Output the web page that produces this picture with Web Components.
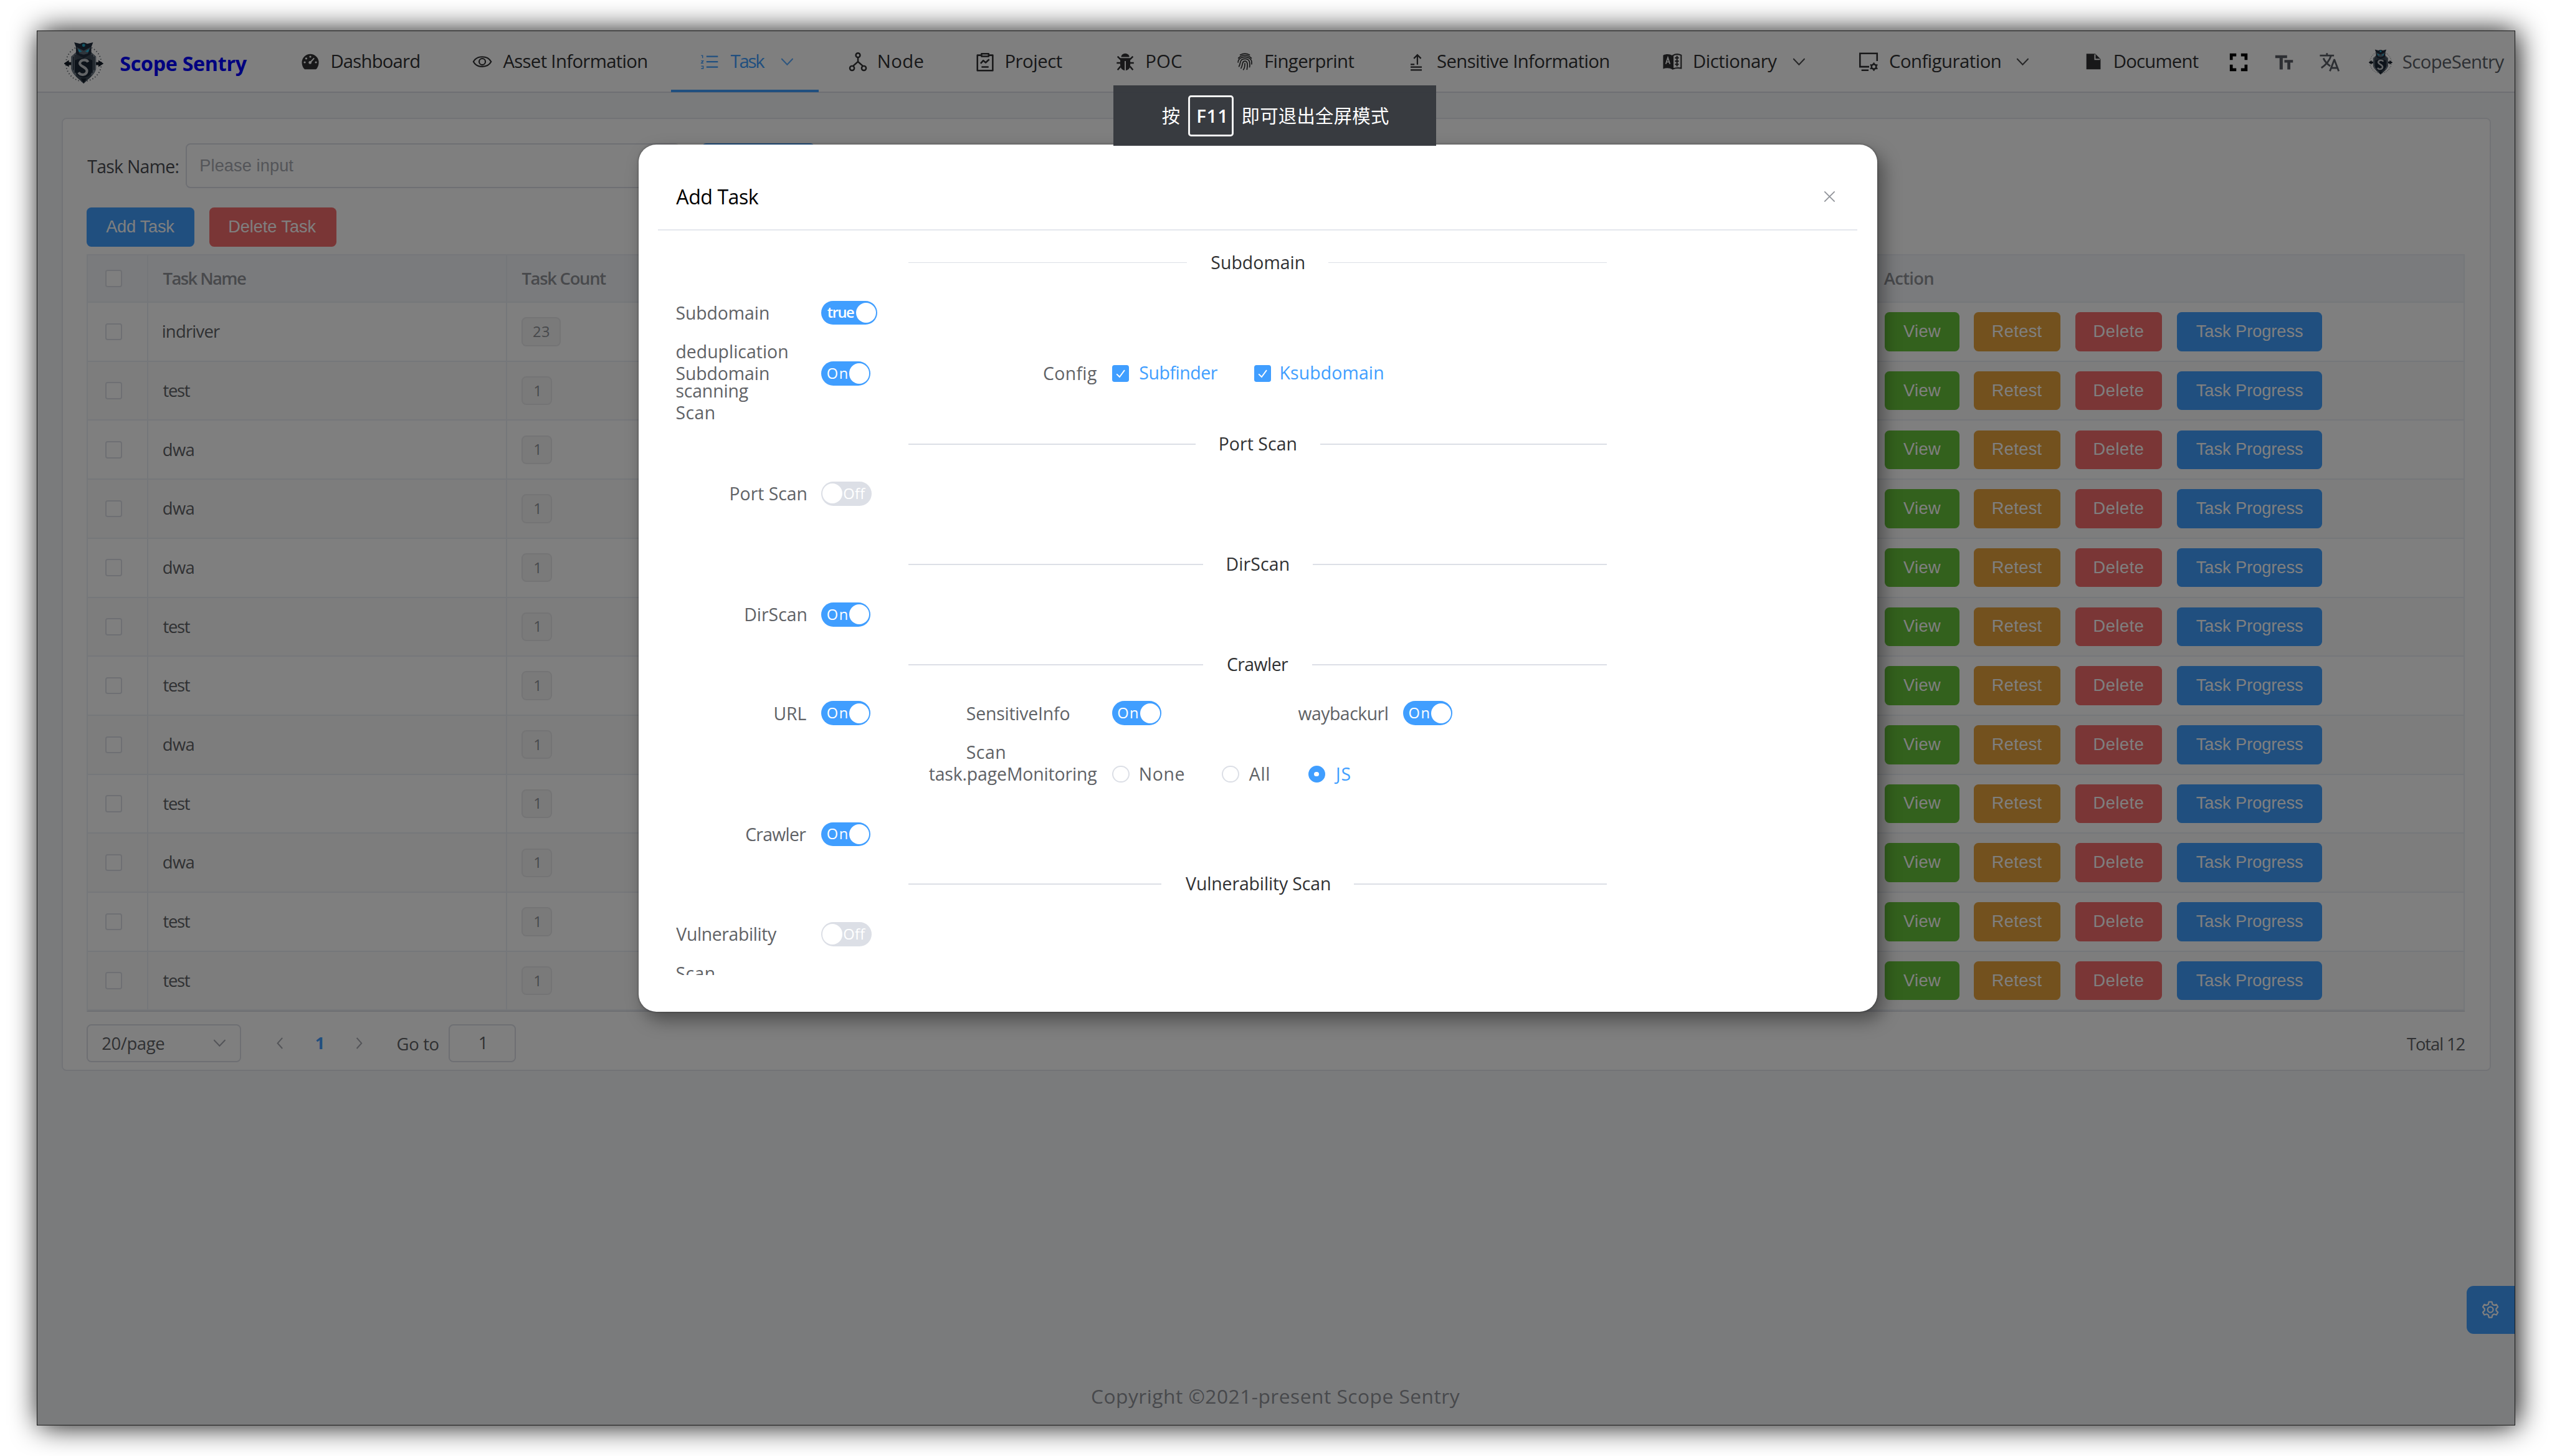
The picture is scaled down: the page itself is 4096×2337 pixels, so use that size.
<!DOCTYPE html>
<html lang="en">
<head>
<meta charset="utf-8">
<title>Scope Sentry</title>
<style>
html,body{margin:0;padding:0;background:#fff;overflow:hidden}
body{width:4096px;height:2337px;font-family:"Open Sans","Noto Sans CJK SC",sans-serif}
</style>
</head>
<body>
<scope-app></scope-app>
<script>
const OS='"Open Sans","Noto Sans CJK SC",sans-serif', AR='"Liberation Sans",Arial,sans-serif';
const def=(name,render,after)=>customElements.define(name,class extends HTMLElement{
  constructor(){super();this.attachShadow({mode:'open'});}
  connectedCallback(){
    const a=(k,d='')=>this.hasAttribute(k)?this.getAttribute(k):d;
    this.shadowRoot.innerHTML='<style>*{box-sizing:border-box}</style>'+render(a);
    if(after)after(this,a);
  }
});
const ctx=document.createElement('canvas').getContext('2d');

/* Text whose box is its ink: w sets the ink width, spread by letter spacing. */
def('fit-text',a=>`<style>:host{display:inline-block;white-space:pre;flex:none}span{display:block;font-variant-ligatures:none}</style><span></span>`,(el,a)=>{
  const t=a('t'),fs=+a('fs',30),wt=a('wt','400'),ff=a('ff')==='ar'?AR:OS,w=+a('w',0);
  const s=el.shadowRoot.querySelector('span');s.textContent=t;
  ctx.font=`${wt} ${fs}px ${ff}`;
  const m=ctx.measureText(t),ink=m.actualBoundingBoxLeft+m.actualBoundingBoxRight;
  const ls=w&&t.length>1?(w-ink)/(t.length-1):0;
  s.style.cssText=`font:${wt} ${fs}px/${a('lh',fs*1.4)}px ${ff};letter-spacing:${ls.toFixed(3)}px;margin-left:${m.actualBoundingBoxLeft.toFixed(2)}px;width:${(w||ink)-m.actualBoundingBoxLeft}px`;
  if(a('c'))s.style.color=a('c');
});

const ICONS={
dash:`<path d="M8.500 31C5 28 3.700 23 3.700 19.300A14.300 14.300 0 0 1 32.300 19.300C32.300 23 31 28 27.500 31Z" fill="currentColor"/><g fill="#fff"><circle cx="18" cy="9.500" r="1.700"/><circle cx="11" cy="12.500" r="1.700"/><circle cx="8.500" cy="19" r="1.700"/><circle cx="27.500" cy="19" r="1.700"/><circle cx="17.600" cy="19.500" r="2.500"/></g><path d="M17.600 19.500L24.500 12" stroke="#fff" stroke-width="2.100"/>`,
eye:`<g fill="none" stroke="currentColor" stroke-width="2.3"><path d="M3 18C9 7 27 7 33 18C27 29 9 29 3 18Z"/><circle cx="18" cy="18" r="5.3"/></g>`,
list:`<g stroke="currentColor" stroke-width="2.4"><path d="M12.500 9H32M12.500 18H32M12.500 27H32"/><path d="M3.500 7.500H6V12M3.500 16.500H7L4 20.500H7.500M3.500 25.500H7V29.500H3.500" fill="none" stroke-width="1.500"/></g>`,
node:`<g fill="none" stroke="currentColor" stroke-width="2.600"><circle cx="18" cy="7" r="3.600"/><circle cx="8" cy="29" r="3.800"/><circle cx="28" cy="29" r="3.800"/><path d="M18 11V18L9.500 25.500M18 18L26.500 25.500"/></g>`,
proj:`<g fill="none" stroke="currentColor" stroke-width="2.700" stroke-linejoin="round"><path d="M11 7H5V33H31V7H25"/><path d="M12 4.500H24V9H12Z"/><path d="M10.500 21L15 16L19 19.500L25 14M12 27H24"/></g>`,
bug:`<g fill="currentColor"><path d="M11 10A7 6 0 0 1 25 10Z"/><path d="M9.500 12H26.500V24A8.500 9 0 0 1 9.500 24Z"/></g><path d="M18 17V33" stroke="#fff" stroke-width="2"/><g fill="none" stroke="currentColor" stroke-width="2.600"><path d="M5 9L10 14M31 9L26 14M3.500 20H10M32.500 20H26M5 32L10 26M31 32L26 26"/></g>`,
finger:`<g fill="none" stroke="currentColor" stroke-width="1.800" stroke-linecap="round"><path d="M10 6.500C15 3.800 21 3.800 26 6.500M7 12C13 5.500 23 5.500 29 12M6.500 19C6.500 7 29.500 7 29.500 19V22M8 26C11 22 8.500 13 18 13C26 13 27 19 26 27M11.500 29C15 24 12.500 17 18 17C23 17 23 24 21.500 31M15.500 31.500C18 28 18 25 18 21"/></g>`,
up:`<g fill="none" stroke="currentColor" stroke-width="2.400"><path d="M20 23V7M14 12.500L20 6.500L26 12.500M8.500 22.500H15M8.500 27H27.500M8.500 32H27.500"/></g>`,
book:`<path d="M2.500 7C8 4.500 14 5 18 7.500V31C14 28.500 8 28 2.500 30Z" fill="currentColor"/><path d="M19 7.500C23 5 28 4.500 33 7V29C28 28 23 28.500 19 30Z" fill="none" stroke="currentColor" stroke-width="2.200"/><path d="M7 22L10.500 11L14 22M8.500 18.500H12.500" fill="none" stroke="#fff" stroke-width="1.800"/><path d="M22.500 11.500H29M22.500 17H29M22.500 22.500H29M26 8V26" stroke="currentColor" stroke-width="2.200"/>`,
cfg:`<g fill="none" stroke="currentColor" stroke-width="2.700"><path d="M19 26.500H3.500V4H32.500V17M6 32.500H18"/><circle cx="27" cy="26.500" r="4"/><path d="M27 19.500V23M27 30V33.500M20.900 23L24 24.700M30 28.300L33.100 30M20.900 30L24 28.300M30 24.700L33.100 23" stroke-width="2.400"/></g>`,
doc:`<path d="M6 4.500H21L30 13.500V31H6Z" fill="currentColor"/><path d="M20.500 5.500V14H29" fill="none" stroke="#fff" stroke-width="2"/>`,
full:`<path d="M5.500 14V5.500H14M22 5.500H30.500V14M30.500 22V30.500H22M14 30.500H5.500V22" fill="none" stroke="currentColor" stroke-width="5"/>`,
font:`<path d="M3 6H23V10.800H15.700V30H10.300V10.800H3ZM18.500 14H33V18.500H28.500V30H23.500V18.500H18.500Z" fill="currentColor"/>`,
lang:`<g fill="none" stroke="currentColor" stroke-width="3"><path d="M1.500 6.500H25.500M13.500 2.500V6.500M20.500 6.500C18 15 12 22 4 27.500M7.500 11C10 17 14 21 19 24.500"/><path d="M18.500 33L25.800 14H26.200L33.500 33M21 27.500H31"/></g>`,
down:`<path d="M2 6L11 15.500L20 6" fill="none" stroke="currentColor" stroke-width="2.200" stroke-linecap="round"/>`,
left:`<path d="M15 2L7 11L15 20" fill="none" stroke="currentColor" stroke-width="2.200"/>`,
right:`<path d="M7 2L15 11L7 20" fill="none" stroke="currentColor" stroke-width="2.200"/>`,
close:`<path d="M1.500 1.500L20.500 20.500M20.500 1.500L1.500 20.500" stroke="currentColor" stroke-width="2"/>`,
gear:`<g fill="none" stroke="currentColor" stroke-width="2.500" stroke-linejoin="round"><circle cx="18" cy="18" r="5"/><path d="M15.300 4H20.700L21.700 8.300L24.600 10L28.900 8.600L31.500 13.200L28.400 16.400V19.600L31.500 22.800L28.900 27.400L24.600 26L21.700 27.700L20.700 32H15.300L14.300 27.700L11.400 26L7.100 27.400L4.500 22.800L7.600 19.600V16.400L4.500 13.200L7.100 8.600L11.400 10L14.300 8.300Z"/></g>`
};
const SMALL=['down','left','right','close'];
def('ui-icon',a=>{const n=a('n'),b=SMALL.includes(n)?22:36,s=a('s',b);
  return `<style>:host{display:block;flex:none;width:${s}px;height:${s}px;line-height:0}svg{display:block}</style><svg width="${s}" height="${s}" viewBox="0 0 ${b} ${b}">${ICONS[n]}</svg>`});

def('owl-logo',a=>{const w=+a('w',66),h=w*72/66;
  return `<style>:host{display:block;flex:none}svg{display:block}</style><svg width="${w}" height="${h}" viewBox="0 0 66 72">
  <circle cx="33" cy="37" r="30" fill="none" stroke="#5c636b" stroke-width="2" stroke-dasharray="1.500 3.500"/>
  <path d="M1 37L7 33V41ZM65 37L59 33V41Z" fill="#141d28" stroke="#141d28" stroke-width="2"/><path d="M6 37H13M53 37H60" stroke="#141d28" stroke-width="5"/>
  <path d="M12 25L20 18H46L54 25V46C51 57 42 62 33 71C24 62 15 57 12 46Z" fill="#3c4855"/>
  <path d="M12 25L20 19V58C15 54 13 50 12 46ZM54 25L46 19V58C51 54 53 50 54 46Z" fill="#75808c"/>
  <path d="M15.500 25V48M50.500 25V48M18.500 22V53M47.500 22V53" stroke="#1e2a38" stroke-width="1.600"/>
  <path d="M17 1L27 3.500C31 1 35 1 39 3.500L49 1L46 9V19C43 24 38 24 33 28C28 24 23 24 20 19V9Z" fill="#202d3d"/>
  <path d="M21 9L33 15L45 9L40 20L33 22L26 20Z" fill="#5d6a78"/>
  <path d="M23.500 12L30.500 17L25 17.500ZM42.500 12L35.500 17L41 17.500Z" fill="#25bfe6"/><circle cx="33" cy="6" r="2.600" fill="#22a9c9"/>
  <path d="M18 32C24 27 42 27 48 32V48C46 56 40 60 33 61C26 60 20 56 18 48Z" fill="#1b2634"/><path d="M28 62H38L33 70Z" fill="#16202c"/>
  <path d="M40.500 34.500C38 29.500 28 30 26.500 36C25.500 42 39.500 43 38.500 50C38 56.500 28 58 24.500 52" fill="none" stroke="#c4c8cc" stroke-width="4.400"/>
  </svg>`});

def('nav-item',a=>`<style>:host{display:flex;align-items:center;flex:0 0 ${a('w')}px;height:104px;padding-left:48px;box-sizing:border-box;color:${a('on')?'#409eff':'#303133'};${a('on')?'border-bottom:4.300px solid #409eff;padding-top:4px':''}}
  fit-text{margin:-1px 0 0 ${a('g',18)}px}.d{margin:1px 0 0 26px;opacity:.85}</style>
  <ui-icon n="${a('i')}"></ui-icon><fit-text t="${a('t')}" w="${a('tw')}" fs="31"></fit-text>${a('d')?'<ui-icon class="d" n="down"></ui-icon>':''}`);

def('top-bar',a=>`<style>:host{display:flex;flex:none;height:104.500px;background:#fff;border-bottom:2.200px solid #dcdfe6;align-items:center;box-sizing:border-box;padding-left:46px}
  owl-logo{margin-top:4px}.b{margin:5px 41px 0 29px;color:#00f}.r{display:flex;align-items:center;color:#5a5e66}.r>*{margin-top:2px}</style>
  <owl-logo w="66"></owl-logo><fit-text class="b" t="Scope Sentry" w="215" fs="34" wt="700"></fit-text>
  <nav-item i="dash" t="Dashboard" tw="148" w="291.5" g="19"></nav-item>
  <nav-item i="eye" t="Asset Information" tw="244" w="385.5" g="17"></nav-item>
  <nav-item i="list" t="Task" tw="59" w="250.500" g="17" d="1" on="1"></nav-item>
  <nav-item i="node" t="Node" tw="75" w="216"></nav-item>
  <nav-item i="proj" t="Project" tw="95" w="238"></nav-item>
  <nav-item i="bug" t="POC" tw="59" w="202" g="18.5"></nav-item>
  <nav-item i="finger" t="Fingerprint" tw="150" w="291"></nav-item>
  <nav-item i="up" t="Sensitive Information" tw="291" w="434" g="17.5"></nav-item>
  <nav-item i="book" t="Dictionary" tw="140" w="332" g="19.500" d="1"></nav-item>
  <nav-item i="cfg" t="Configuration" tw="188" w="381" d="1"></nav-item>
  <nav-item i="doc" t="Document" tw="142" w="243.500" g="19"></nav-item>
  <div class="r"><ui-icon n="full" s="36" style="color:#000;margin-left:49px"></ui-icon><ui-icon n="font" style="margin-left:42px"></ui-icon><ui-icon n="lang" s="36" style="margin-left:41px"></ui-icon>
  <owl-logo w="40" style="margin-left:48px"></owl-logo><fit-text t="ScopeSentry" w="172" fs="31" style="margin-left:18px"></fit-text></div>`);

const BC={blue:'#409eff',red:'#f56c6c',green:'#67c23a',orange:'#e6a23c'};
def('ui-button',a=>`<style>:host{display:flex;flex:none;width:${a('w')}px;height:66px;border-radius:8px;background:${BC[a('k')]};color:#fff;align-items:center;justify-content:center}</style>
  ${a('t')?`<fit-text ff="ar" fs="28.7" t="${a('t')}" w="${a('tw')}" style="margin-top:-1px"></fit-text>`:''}`);
def('ui-check',a=>`<style>:host{display:block;flex:none;width:29px;height:29px;border:2.200px solid ${a('on')?'#409eff':'#dcdfe6'};border-radius:4px;background:${a('on')?'#409eff':'#fff'};box-sizing:border-box}svg{display:block}</style>${a('on')?'<svg width="25" height="25" viewBox="0 0 25 25"><path d="M5.500 13L10.500 18L19 6.500" fill="none" stroke="#fff" stroke-width="2"/></svg>':''}`);
def('ui-radio',a=>`<style>:host{display:flex;flex:none;width:29px;height:29px;border:2.200px solid ${a('on')?'#409eff':'#dcdfe6'};border-radius:50%;background:${a('on')?'#409eff':'#fff'};box-sizing:border-box;align-items:center;justify-content:center}i{width:8px;height:8px;border-radius:50%;background:#fff}</style><i></i>`);
def('ui-switch',a=>{const on=a('s')!=='Off',w=a('s')==='true'?95:on?83.5:85;
  return `<style>:host{display:flex;flex:none;width:${w}px;height:41px;border-radius:21px;background:${on?'#409eff':'#dcdfe6'};align-items:center;justify-content:space-between;padding:0 ${on?'2px 0 10px':'10px 0 2px'};flex-direction:${on?'row':'row-reverse'};box-sizing:border-box;color:#fff}i{width:34px;height:34px;border-radius:50%;background:#fff}</style>
  <fit-text t="${a('s')}" fs="25" wt="${a('s')==='true'?600:on?500:400}" w="${a('s')==='true'?46:on?34:37}"></fit-text><i></i>`});

def('data-row',a=>`<style>:host{display:grid;grid-template-columns:102px 608px 1fr 1009px;height:100px;background:${a('alt')?'#fafafa':'#fff'};border-bottom:2.200px solid #ebeef5;box-sizing:border-box;color:#606266}
  div{display:flex;align-items:center;border-right:2.200px solid #ebeef5;padding-left:25px}.c{padding-left:29px}.a{gap:25px;padding-left:26.500px}
  .tag{width:${a('n')==='23'?66:51}px;height:49px;border:2.200px solid #e9e9eb;background:#f4f4f5;border-radius:8px;color:#909399;justify-content:center;padding:0}</style>
  <div class="c"><ui-check></ui-check></div><div><fit-text t="${a('t')}" w="${a('tw')}" fs="29"></fit-text></div><div><div class="tag"><fit-text t="${a('n')}" fs="25" ${a('n')==='23'?'w="27"':''}></fit-text></div></div>
  <div class="a"><ui-button k="green" t="View" w="126" tw="63"></ui-button><ui-button k="orange" t="Retest" w="147" tw="83"></ui-button><ui-button k="red" t="Delete" w="147" tw="83"></ui-button><ui-button k="blue" t="Task Progress" w="246" tw="181"></ui-button></div>`);

const ROWS=['indriver','test','dwa','dwa','dwa','test','test','dwa','test','dwa','test','test'],TW={indriver:97,test:46,dwa:52};
def('task-card',a=>`<style>:host{display:flex;flex-direction:column;flex:none;width:4116px;height:1616px;margin:42px 0 0 42px;background:#fff;border:2.200px solid #e4e7ed;border-radius:8px;box-sizing:border-box;padding:41.500px 42px 0 40px}
  .f{display:flex;align-items:center;height:76px;color:#606266}.in{width:837px;height:76px;border:2.200px solid #dcdfe6;border-radius:8px;margin-left:13px;display:flex;align-items:center;padding-left:23px;color:#a8abb2}
  .s{width:192px;height:76px;background:#409eff;border-radius:8px;margin-left:37px}.b{display:flex;gap:26px;margin-top:33px}
  .t{margin-top:13px;border:2.200px solid #ebeef5;border-right:0;border-bottom:2.200px solid #dcdfe6}
  .h{display:grid;grid-template-columns:102px 608px 1fr 1009px;height:80px;background:#f5f7fa;border-bottom:2.200px solid #ebeef5;color:#909399}.h div{display:flex;align-items:center;border-right:2.200px solid #ebeef5;padding-left:25px}
  .p{display:flex;align-items:center;height:64px;margin-top:21px;color:#606266}.sel{width:262px;height:64px;border:2.200px solid #dcdfe6;border-radius:8px;display:flex;align-items:center;justify-content:space-between;padding:0 24px 0 24px}.go{width:114px;height:64px;border:2.200px solid #dcdfe6;border-radius:8px;display:flex;align-items:center;justify-content:center;margin-left:17px}</style>
  <div class="f"><fit-text t="Task Name:" w="154" fs="30" style="margin:3px 0 0 1px;color:#4b4d52"></fit-text><div class="in"><fit-text ff="ar" fs="28.7" t="Please input" w="157"></fit-text></div><div class="s"></div></div>
  <div class="b"><ui-button k="blue" t="Add Task" w="182" tw="117"></ui-button><ui-button k="red" t="Delete Task" w="215" tw="148"></ui-button></div>
  <div class="t"><div class="h"><div style="padding-left:29px"><ui-check></ui-check></div><div><fit-text t="Task Name" w="141" fs="29" wt="600"></fit-text></div><div><fit-text t="Task Count" w="143" fs="29" wt="600"></fit-text></div><div><fit-text t="Action" w="84" fs="29" wt="600"></fit-text></div></div>
  ${ROWS.map((r,i)=>`<data-row t="${r}" tw="${TW[r]}" n="${i?1:23}" ${i%2?'alt="1"':''}></data-row>`).join('')}</div>
  <div class="p"><div class="sel"><fit-text t="20/page" w="105" fs="29" style="margin-top:2px"></fit-text><ui-icon n="down" style="color:#a8abb2"></ui-icon></div>
  <ui-icon n="left" style="margin-left:54px;color:#a8abb2"></ui-icon><fit-text t="1" fs="29" wt="700" style="margin-left:50px;color:#409eff"></fit-text><ui-icon n="right" style="margin-left:51px;color:#a8abb2"></ui-icon>
  <fit-text t="Go to" w="70" fs="29" style="margin:3px 0 0 54px"></fit-text><div class="go"><fit-text t="1" fs="29"></fit-text></div><fit-text t="Total 12" w="98" fs="29" style="margin:3px 0 0 auto"></fit-text></div>`);

/* Divider line broken by a centred caption. */
def('section-line',a=>`<style>:host{display:flex;align-items:center;height:2px;width:1184px;margin:${a('m')}px 0 0 393.500px;gap:41px;color:#303133}i{flex:1;height:2px;background:#dcdfe6}</style><i></i><fit-text t="${a('t')}" w="${a('w')}" fs="30"></fit-text><i></i>`);
/* One form field: a 220px right-aligned label whose second line may hang below, then the control. */
def('form-field',a=>{const L=a('l').split('|'),W=a('w').split('|');
  return `<style>:host{display:flex;flex:none;height:66px;margin-left:${a('x',0)}px;align-items:center}.l{width:${a('lw',220)}px;height:66px;display:flex;justify-content:flex-end;flex:none;color:#606266}.k{width:${L.length>1?a('lw',220)+'px':'auto'}}fit-text{display:block}.c{display:flex;align-items:center;margin-left:26px}</style>
  <div class="l"><div class="k">${L.map((t,i)=>`<fit-text t="${t}" w="${W[i]}" fs="30" lh="66"></fit-text>`).join('')}</div></div><div class="c"><slot></slot></div>`});
def('form-row',a=>`<style>:host{display:flex;height:66px;margin-top:${a('m')}px}</style><slot></slot>`);

def('task-modal',a=>`<style>:host{display:block;position:absolute;left:1019px;top:191.500px;width:2099px;height:1470px;background:#fff;border-radius:30px;box-shadow:10px 14px 30px rgba(0,0,0,.38),0 0 4px rgba(0,0,0,.4);box-sizing:border-box;padding:0 33px}
  .h{height:146.500px;border-bottom:2.200px solid #e4e7ed;display:flex;align-items:center;justify-content:space-between;padding:33px 37px 0 31px;color:#000}
  .body{height:1261px;overflow:hidden;padding-left:31px}</style>
  <div class="h"><fit-text t="Add Task" w="140" fs="34"></fit-text><ui-icon n="close" s="20" style="color:#909399"></ui-icon></div>
  <div class="body"><div style="height:52.500px"></div>
  <section-line m="0.5" t="Subdomain" w="157"></section-line>
  <form-row m="51"><form-field l="Subdomain|deduplication|scanning" w="156|188|122"><ui-switch s="true"></ui-switch></form-field></form-row>
  <form-row m="37"><form-field l="Subdomain|Scan" w="156|64"><ui-switch s="On"></ui-switch></form-field>
    <form-field x="293" lw="90" l="Config" w="90"><ui-check on="1"></ui-check><fit-text t="Subfinder" w="132" fs="30" c="#409eff" style="margin:-2px 62px 0 18px"></fit-text><ui-check on="1"></ui-check><fit-text t="Ksubdomain" w="173" fs="30" c="#409eff" style="margin:-2px 0 0 16px"></fit-text></form-field></form-row>
  <section-line m="86" t="Port Scan" w="129"></section-line>
  <form-row m="49.5"><form-field l="Port Scan" w="128"><ui-switch s="Off"></ui-switch></form-field></form-row>
  <section-line m="86.5" t="DirScan" w="104"></section-line>
  <form-row m="50.5"><form-field l="DirScan" w="103"><ui-switch s="On"></ui-switch></form-field></form-row>
  <section-line m="51" t="Crawler" w="103"></section-line>
  <form-row m="48.5"><form-field l="URL" w="53"><ui-switch s="On"></ui-switch></form-field>
    <form-field x="163" l="SensitiveInfo|Scan" w="174|64"><ui-switch s="On"></ui-switch></form-field>
    <form-field x="232" lw="152" l="waybackurl" w="152"><ui-switch s="On"></ui-switch></form-field></form-row>
  <form-row m="37"><form-field x="428" lw="285" l="task.pageMonitoring" w="285"><ui-radio></ui-radio><fit-text t="None" w="75" fs="30" style="margin:0 64px 0 18px;color:#606266"></fit-text><ui-radio></ui-radio><fit-text t="All" w="34" fs="30" style="margin:0 66px 0 17px;color:#606266"></fit-text><ui-radio on="1"></ui-radio><fit-text t="JS" w="28" fs="30" c="#409eff" style="margin-left:15px"></fit-text></form-field></form-row>
  <form-row m="36"><form-field l="Crawler" w="102"><ui-switch s="On"></ui-switch></form-field></form-row>
  <section-line m="50.5" t="Vulnerability Scan" w="244"></section-line>
  <form-row m="51"><form-field l="Vulnerability|Scan" w="171|64"><ui-switch s="Off"></ui-switch></form-field></form-row>
  </div>`);

def('f11-toast',a=>`<style>:host{display:flex;position:absolute;left:1824px;top:92px;width:547px;height:102px;background:rgba(54,57,62,.97);align-items:center;padding-left:82px;box-sizing:border-box;color:#fff}
  .k{width:77px;height:70px;border:3.200px solid #f2f2f2;border-radius:5px;display:flex;align-items:center;justify-content:center;margin:0 15px 0 14px}fit-text{margin-top:2px}</style>
  <fit-text t="按" w="31" fs="31"></fit-text><div class="k"><fit-text t="F11" w="46" fs="31" wt="600"></fit-text></div><fit-text t="即可退出全屏模式" w="247" fs="31"></fit-text>`);

def('scope-app',a=>`<style>:host{display:flow-root;width:4325px;height:2468px;zoom:.94705;overflow:hidden;background:#fff}
  .win{position:relative;width:4201px;height:2364px;margin:52px 0 0 62px;border:1.100px solid #1a1a1a;box-shadow:4px 1px 46px rgba(0,0,0,1)}
  .page{display:flex;flex-direction:column;height:100%;background:#f5f7f9}
  .foot{margin-top:auto;height:102px;display:flex;align-items:center;justify-content:center;color:#909399;padding-top:6px}
  .set{position:absolute;right:0;top:2126px;width:82px;height:82px;border-radius:12px 0 0 12px;background:#409eff;color:#fff;display:flex;align-items:center;justify-content:center}
  .mask{position:absolute;inset:0;background:rgba(0,0,0,.5)}</style>
  <div class="win"><div class="page"><top-bar></top-bar><task-card></task-card><div class="foot"><fit-text t="Copyright ©2021-present Scope Sentry" w="623" fs="33.5"></fit-text></div></div>
  <div class="set"><ui-icon n="gear" s="34"></ui-icon></div><div class="mask"></div><task-modal></task-modal><f11-toast></f11-toast></div>`);
</script>
</body>
</html>
